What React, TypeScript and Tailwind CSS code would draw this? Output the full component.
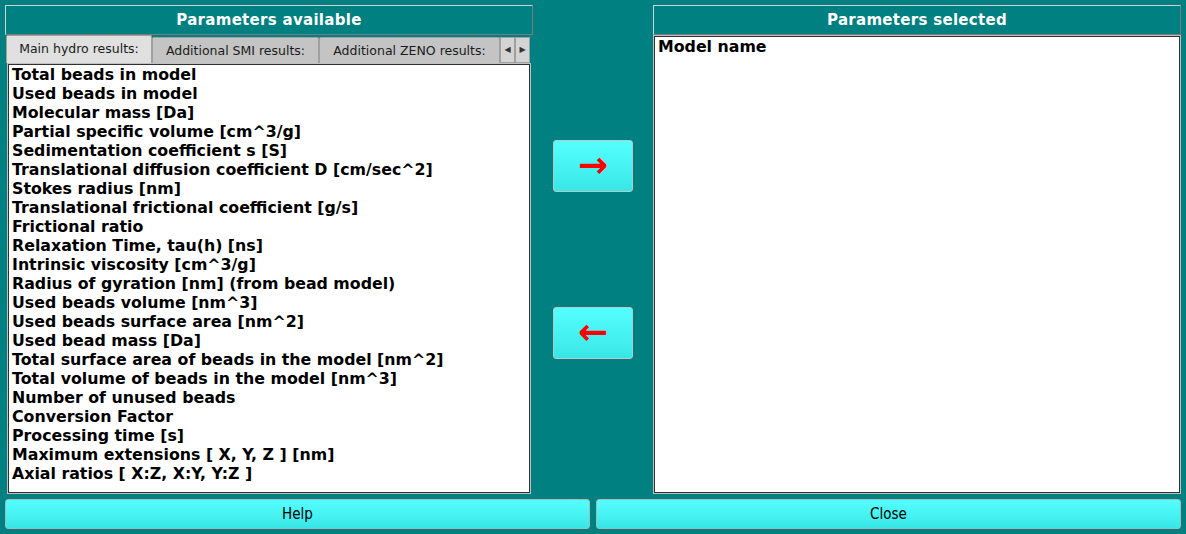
const items = [
  "Total beads in model",
  "Used beads in model",
  "Molecular mass [Da]",
  "Partial specific volume [cm^3/g]",
  "Sedimentation coefficient s [S]",
  "Translational diffusion coefficient D [cm/sec^2]",
  "Stokes radius [nm]",
  "Translational frictional coefficient [g/s]",
  "Frictional ratio",
  "Relaxation Time, tau(h) [ns]",
  "Intrinsic viscosity [cm^3/g]",
  "Radius of gyration [nm] (from bead model)",
  "Used beads volume [nm^3]",
  "Used beads surface area [nm^2]",
  "Used bead mass [Da]",
  "Total surface area of beads in the model [nm^2]",
  "Total volume of beads in the model [nm^3]",
  "Number of unused beads",
  "Conversion Factor",
  "Processing time [s]",
  "Maximum extensions [ X, Y, Z ] [nm]",
  "Axial ratios [ X:Z, X:Y, Y:Z ]",
];

const tabs = [
  { label: "Main hydro results:", w: "w-[146px]" },
  { label: "Additional SMI results:", w: "w-[167px]" },
  { label: "Additional ZENO results:", w: "w-[181px]" },
];

function Header({ title }: { title: string }) {
  return (
    <div className="h-[30px] flex items-center justify-center bg-[#008080] border border-t-[#d0d0d0] border-l-[#d0d0d0] border-b-[#7a7a7a] border-r-[#7a7a7a] text-white font-bold text-[15px] tracking-[0.3px]">
      {title}
    </div>
  );
}

function ArrowButton({ glyph }: { glyph: string }) {
  return (
    <button className="w-[80px] h-[52px] rounded-[3px] border border-[#b8c8c8] bg-gradient-to-b from-[#55ffff] to-[#38e6e6] flex items-center justify-center text-[#ff0000] font-bold text-[36px] leading-none pb-[3px]">
      {glyph}
    </button>
  );
}

export default function App() {
  return (
    <div
      className="w-[1186px] h-[534px] bg-[#008080] flex flex-col px-[5px] pt-[5px] overflow-hidden"
      style={{ fontFamily: '"DejaVu Sans", sans-serif' }}
    >
      <div className="flex h-[489px]">
        <div className="w-[528px] flex flex-col">
          <Header title="Parameters available" />
          <div className="flex h-[28px] pl-px">
            {tabs.map((t, i) => (
              <div
                key={t.label}
                className={`${t.w} h-[28px] flex items-center justify-center text-[12.5px] text-[#1a1a1a] border border-[#a0a0a0] border-b-0 rounded-t-[2px] ${
                  i === 0 ? "bg-[#e0e0e0]" : "bg-[#c4c4c4] mt-[2px] h-[26px]"
                }`}
              >
                {t.label}
              </div>
            ))}
            <div className="flex mt-[2px] h-[26px]">
              <div className="w-[15px] border border-[#a0a0a0] bg-[#d4d4d4] flex items-center justify-center text-[8px] text-[#333]">
                ◀
              </div>
              <div className="w-[15px] border border-[#a0a0a0] bg-[#d4d4d4] flex items-center justify-center text-[8px] text-[#333]">
                ▶
              </div>
            </div>
          </div>
          <div className="flex-1 ml-[2px] mr-[2px] bg-white border border-[#c0c0c0] outline outline-1 outline-[#303030] -outline-offset-2 pl-[4px] pt-[1px] overflow-hidden">
            {items.map((it) => (
              <div key={it} className="h-[19px] leading-[19px] text-[15.8px] font-bold text-black whitespace-nowrap">
                {it}
              </div>
            ))}
          </div>
        </div>

        <div className="flex-1 flex flex-col items-center justify-start">
          <div className="h-[135px]" />
          <ArrowButton glyph="→" />
          <div className="h-[115px]" />
          <ArrowButton glyph="←" />
        </div>

        <div className="w-[528px] flex flex-col">
          <Header title="Parameters selected" />
          <div className="flex-1 bg-white border border-[#c0c0c0] outline outline-1 outline-[#303030] -outline-offset-2 pl-[4px] pt-[1px]">
            <div className="h-[19px] leading-[19px] text-[15.8px] font-bold text-black">Model name</div>
          </div>
        </div>
      </div>

      <div className="flex gap-[6px] mt-[5px]">
        <button className="flex-1 h-[30px] rounded-[3px] border border-[#a8b8b8] bg-gradient-to-b from-[#55ffff] to-[#38e6e6] text-[15px] text-black" style={{ fontFamily: '"DejaVu Sans Condensed", "DejaVu Sans", sans-serif', fontWeight: 300 }}>
          Help
        </button>
        <button className="flex-1 h-[30px] rounded-[3px] border border-[#a8b8b8] bg-gradient-to-b from-[#55ffff] to-[#38e6e6] text-[15px] text-black" style={{ fontFamily: '"DejaVu Sans Condensed", "DejaVu Sans", sans-serif', fontWeight: 300 }}>
          Close
        </button>
      </div>
    </div>
  );
}
